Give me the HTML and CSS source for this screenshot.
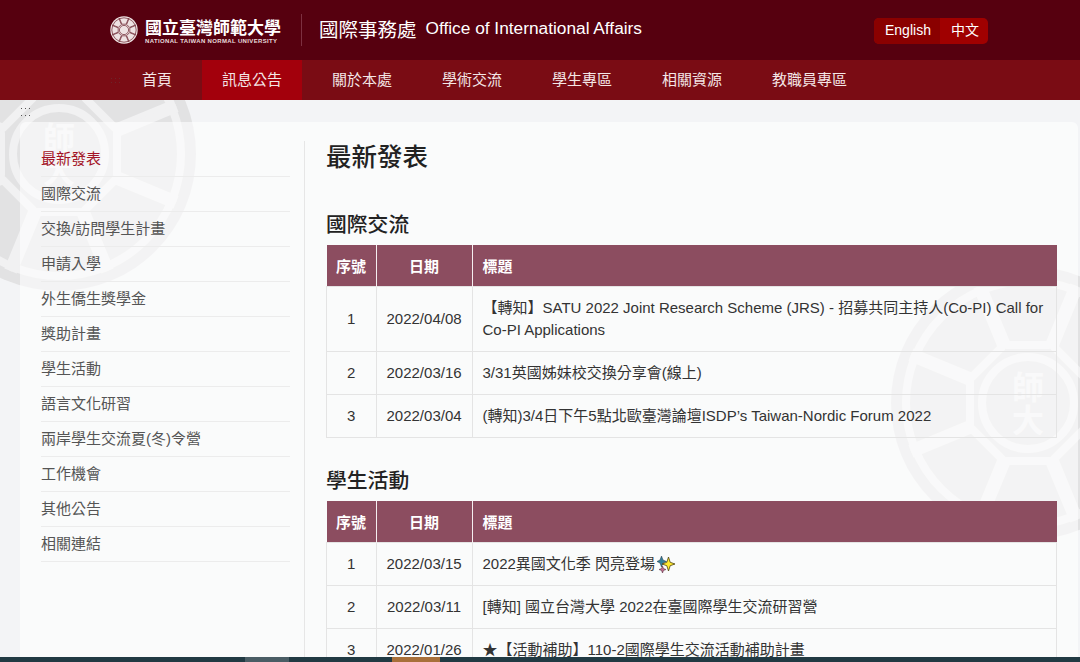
FILE: index.html
```html
<!DOCTYPE html>
<html lang="zh-Hant">
<head>
  <meta charset="UTF-8">
  <meta name="viewport" content="width=device-width, initial-scale=1.0">
  <title>最新發表 - 國際事務處</title>
  <link rel="stylesheet" href="styles.css">
</head>
<body>
  <svg class="defs" width="0" height="0" aria-hidden="true">
    <symbol id="seal" viewBox="-140 -140 280 280">
      <circle class="seal-disc" r="137"/>
      <circle class="seal-line" r="122"/>
      <circle class="seal-line" r="46"/>
      <path id="petal" class="seal-line" d="M-46,-118 L-21,-58 L21,-58 L46,-118"/>
      <use href="#petal" transform="rotate(45)"/>
      <use href="#petal" transform="rotate(90)"/>
      <use href="#petal" transform="rotate(135)"/>
      <use href="#petal" transform="rotate(180)"/>
      <use href="#petal" transform="rotate(225)"/>
      <use href="#petal" transform="rotate(270)"/>
      <use href="#petal" transform="rotate(315)"/>
    </symbol>
  </svg>

  <svg class="watermark watermark-left" viewBox="-140 -140 280 280" aria-hidden="true">
    <use href="#seal" x="-140" y="-140" width="280" height="280"/>
    <text class="seal-text" y="-4">師</text>
    <text class="seal-text" y="29">大</text>
  </svg>
  <svg class="watermark watermark-right" viewBox="-140 -140 280 280" aria-hidden="true">
    <use href="#seal" x="-140" y="-140" width="280" height="280"/>
    <text class="seal-text" y="-4">師</text>
    <text class="seal-text" y="29">大</text>
  </svg>

  <header class="topbar">
    <a class="logo" href="#">
      <svg class="logo-seal" aria-hidden="true"><use href="#seal"/></svg>
      <span class="logo-text">
        <span class="logo-zh">國立臺灣師範大學</span>
        <span class="logo-en">NATIONAL TAIWAN NORMAL UNIVERSITY</span>
      </span>
    </a>
    <div class="site-name">
      <span class="site-zh">國際事務處</span>
      <span class="site-en">Office of International Affairs</span>
    </div>
    <div class="lang">
      <a class="lang-current" href="#">English</a>
      <a href="#">中文</a>
    </div>
  </header>

  <nav class="mainnav">
    <span class="dots dots-nav"></span>
    <a href="#">首頁</a>
    <a class="active" href="#">訊息公告</a>
    <a href="#">關於本處</a>
    <a href="#">學術交流</a>
    <a href="#">學生專區</a>
    <a href="#">相關資源</a>
    <a href="#">教職員專區</a>
  </nav>

  <div class="dots dots-page"></div>

  <div class="card">
    <aside class="sidebar">
      <ul>
        <li class="current"><a href="#">最新發表</a></li>
        <li><a href="#">國際交流</a></li>
        <li><a href="#">交換/訪問學生計畫</a></li>
        <li><a href="#">申請入學</a></li>
        <li><a href="#">外生僑生獎學金</a></li>
        <li><a href="#">獎助計畫</a></li>
        <li><a href="#">學生活動</a></li>
        <li><a href="#">語言文化研習</a></li>
        <li><a href="#">兩岸學生交流夏(冬)令營</a></li>
        <li><a href="#">工作機會</a></li>
        <li><a href="#">其他公告</a></li>
        <li><a href="#">相關連結</a></li>
      </ul>
    </aside>

    <main class="content">
      <h1>最新發表</h1>

      <h2>國際交流</h2>
      <table>
        <thead>
          <tr><th class="col-no">序號</th><th class="col-date">日期</th><th class="col-title">標題</th></tr>
        </thead>
        <tbody>
          <tr><td class="center">1</td><td class="center">2022/04/08</td><td>【轉知】SATU 2022 Joint Research Scheme (JRS) - 招募共同主持人(Co-PI) Call for Co-PI Applications</td></tr>
          <tr><td class="center">2</td><td class="center">2022/03/16</td><td>3/31英國姊妹校交換分享會(線上)</td></tr>
          <tr><td class="center">3</td><td class="center">2022/03/04</td><td>(轉知)3/4日下午5點北歐臺灣論壇ISDP’s Taiwan-Nordic Forum 2022</td></tr>
        </tbody>
      </table>

      <h2>學生活動</h2>
      <table>
        <thead>
          <tr><th class="col-no">序號</th><th class="col-date">日期</th><th class="col-title">標題</th></tr>
        </thead>
        <tbody>
          <tr><td class="center">1</td><td class="center">2022/03/15</td><td>2022異國文化季 閃亮登場<svg class="sparkle" viewBox="0 0 18 18" aria-hidden="true"><path fill="#2f7f9a" stroke="#234" stroke-width=".5" d="M4.500 1 L6 5 L9.500 6.500 L6 8 L4.500 12 L3 8 L0 6.500 L3 5 Z"/><path fill="#c06a8a" stroke="#423" stroke-width=".5" d="M5.500 11 L6.500 13.500 L9 14.500 L6.500 15.500 L5.500 18 L4.500 15.500 L2 14.500 L4.500 13.500 Z"/><path fill="#ffe92e" stroke="#4d4210" stroke-width=".8" d="M11.500 2 L13.200 7.300 L18 9 L13.200 10.700 L11.500 16 L9.800 10.700 L5 9 L9.800 7.300 Z"/></svg></td></tr>
          <tr><td class="center">2</td><td class="center">2022/03/11</td><td>[轉知] 國立台灣大學 2022在臺國際學生交流研習營</td></tr>
          <tr><td class="center">3</td><td class="center">2022/01/26</td><td>★【活動補助】110-2國際學生交流活動補助計畫</td></tr>
        </tbody>
      </table>
    </main>
  </div>

  <div class="bottombar">
    <span class="bar-gray"></span>
    <span class="bar-brown"></span>
  </div>
</body>
</html>
```

FILE: styles.css
```css
html,
body {
  height: 100%;
  overflow: hidden;
}

body {
  margin: 0;
  background-color: #f3f4f6;
  font-family: "Liberation Sans", "Noto Sans CJK TC", sans-serif;
  font-size: 15px;
  color: #333;
}

a {
  color: inherit;
  text-decoration: none;
}

.defs {
  position: absolute;
}

.seal-disc {
  fill: var(--seal-disc);
}

.seal-line {
  fill: none;
  stroke: var(--seal-line);
  stroke-width: 8;
  stroke-linejoin: round;
}

.seal-text {
  fill: var(--seal-line);
  font-family: "Noto Sans CJK TC", sans-serif;
  font-size: 32px;
  font-weight: 700;
  text-anchor: middle;
}

/* background seals */
.watermark {
  position: absolute;
  width: 280px;
  height: 280px;
  --seal-disc: #e2e2e3;
  --seal-line: #f1f1f2;
}

.watermark-left {
  left: -81px;
  top: 14px;
}

.watermark-right {
  left: 888px;
  top: 263px;
}

.topbar {
  position: relative;
  display: flex;
  align-items: center;
  height: 60px;
  padding-left: 110px;
  background-color: #56000f;
  color: #fff;
}

.logo {
  display: flex;
  align-items: center;
  gap: 7px;
  width: 191px;
  height: 32px;
  border-right: 1px solid #7d3040;
}

.logo-seal {
  width: 28px;
  height: 28px;
  --seal-disc: #eee3e3;
  --seal-line: #7a3a44;
}

.logo-text {
  display: flex;
  flex-direction: column;
  align-items: flex-start;
}

.logo-zh {
  font-family: "Noto Sans CJK TC", sans-serif;
  font-size: 17px;
  font-weight: 700;
  line-height: 23px;
  white-space: nowrap;
}

.logo-en {
  font-size: 6px;
  font-weight: 700;
  line-height: 7px;
  letter-spacing: 0.35px;
  white-space: nowrap;
  color: #e8dcdc;
}

.site-name {
  display: flex;
  align-items: center;
  gap: 9px;
  margin: 0 0 4px 17px;
  width: 555px;
}

.site-zh {
  font-size: 19.500px;
}

.site-en {
  font-size: 17.300px;
}

.lang {
  display: flex;
  height: 26px;
  margin-top: 2px;
  border-radius: 5px;
  overflow: hidden;
  background-color: #a00000;
  font-size: 14px;
  line-height: 25px;
}

.lang a {
  padding: 0 9px 0 11px;
}

.lang-current {
  background-color: #8a0000;
}

.mainnav {
  position: relative;
  display: flex;
  gap: 10px;
  height: 40px;
  padding-left: 122px;
  background-color: #7a0c14;
  color: #f4e6e6;
}

.mainnav a {
  padding: 0 20px;
  line-height: 40px;
}

.mainnav .active {
  background-color: #a3000c;
}

/* small leftover dot marks */
.dots {
  position: absolute;
  width: 9px;
  height: 8px;
  background-image:
    repeating-linear-gradient(90deg, #555 0 1px, transparent 1px 4px),
    repeating-linear-gradient(90deg, #555 0 1px, transparent 1px 4px);
  background-size: 100% 1px;
  background-position: 0 0, 0 100%;
  background-repeat: no-repeat;
}

.dots-page {
  left: 21px;
  top: 108px;
}

.dots-nav {
  left: 111px;
  top: 18px;
  height: 5px;
  opacity: 0.35;
}

.card {
  position: relative;
  display: flex;
  margin: 22px 2px 0 20px;
  padding: 19px 0 0 21px;
  height: 600px;
  border-radius: 6px 6px 0 0;
  background-color: rgba(255, 255, 255, 0.6);
}

.sidebar {
  width: 249px;
  padding-right: 14px;
  border-right: 1px solid #e6e6e6;
  flex-shrink: 0;
}

.sidebar ul {
  margin: 1px 0 0;
  padding: 0;
  list-style: none;
}

.sidebar li {
  height: 34px;
  line-height: 33px;
  font-size: 15px;
  border-bottom: 1px solid #ececec;
  color: #555;
}

.sidebar .current {
  color: #a31426;
}

.content {
  flex: 1;
  padding-left: 21px;
}

h1 {
  margin: -1px 0 10px;
  font-size: 25.500px;
  font-weight: 500;
  line-height: 34px;
  color: #222;
}

h2 {
  margin: 29px 0 6px;
  font-size: 20.800px;
  font-weight: 500;
  line-height: 28px;
  color: #222;
}

h1 + h2 {
  margin-top: 37px;
}

table {
  width: 731px;
  table-layout: fixed;
  border-collapse: collapse;
}

th {
  height: 41px;
  padding: 0 10px;
  background-color: #8c4d60;
  border-left: 1px solid #f5eef0;
  color: #fff;
  font-weight: 700;
  text-align: center;
  white-space: nowrap;
}

th:first-child {
  border-left: none;
}

.col-date {
  width: 75px;
}

.col-title {
  text-align: left;
}

th.col-no {
  padding: 0;
  width: 49px;
}

td {
  padding: 10px;
  border: 1px solid #e4e4e4;
  line-height: 22px;
  color: #333;
}

.center {
  text-align: center;
}

.sparkle {
  width: 18px;
  height: 18px;
  vertical-align: -4px;
  margin-left: 2px;
}

.bottombar {
  position: fixed;
  left: 0;
  right: 0;
  bottom: 0;
  height: 5px;
  background-color: #213a43;
}

.bar-gray,
.bar-brown {
  position: absolute;
  top: 0;
  height: 5px;
}

.bar-gray {
  left: 245px;
  width: 44px;
  background-color: #4a5d65;
}

.bar-brown {
  left: 392px;
  width: 48px;
  background-color: #a8703a;
}
```
